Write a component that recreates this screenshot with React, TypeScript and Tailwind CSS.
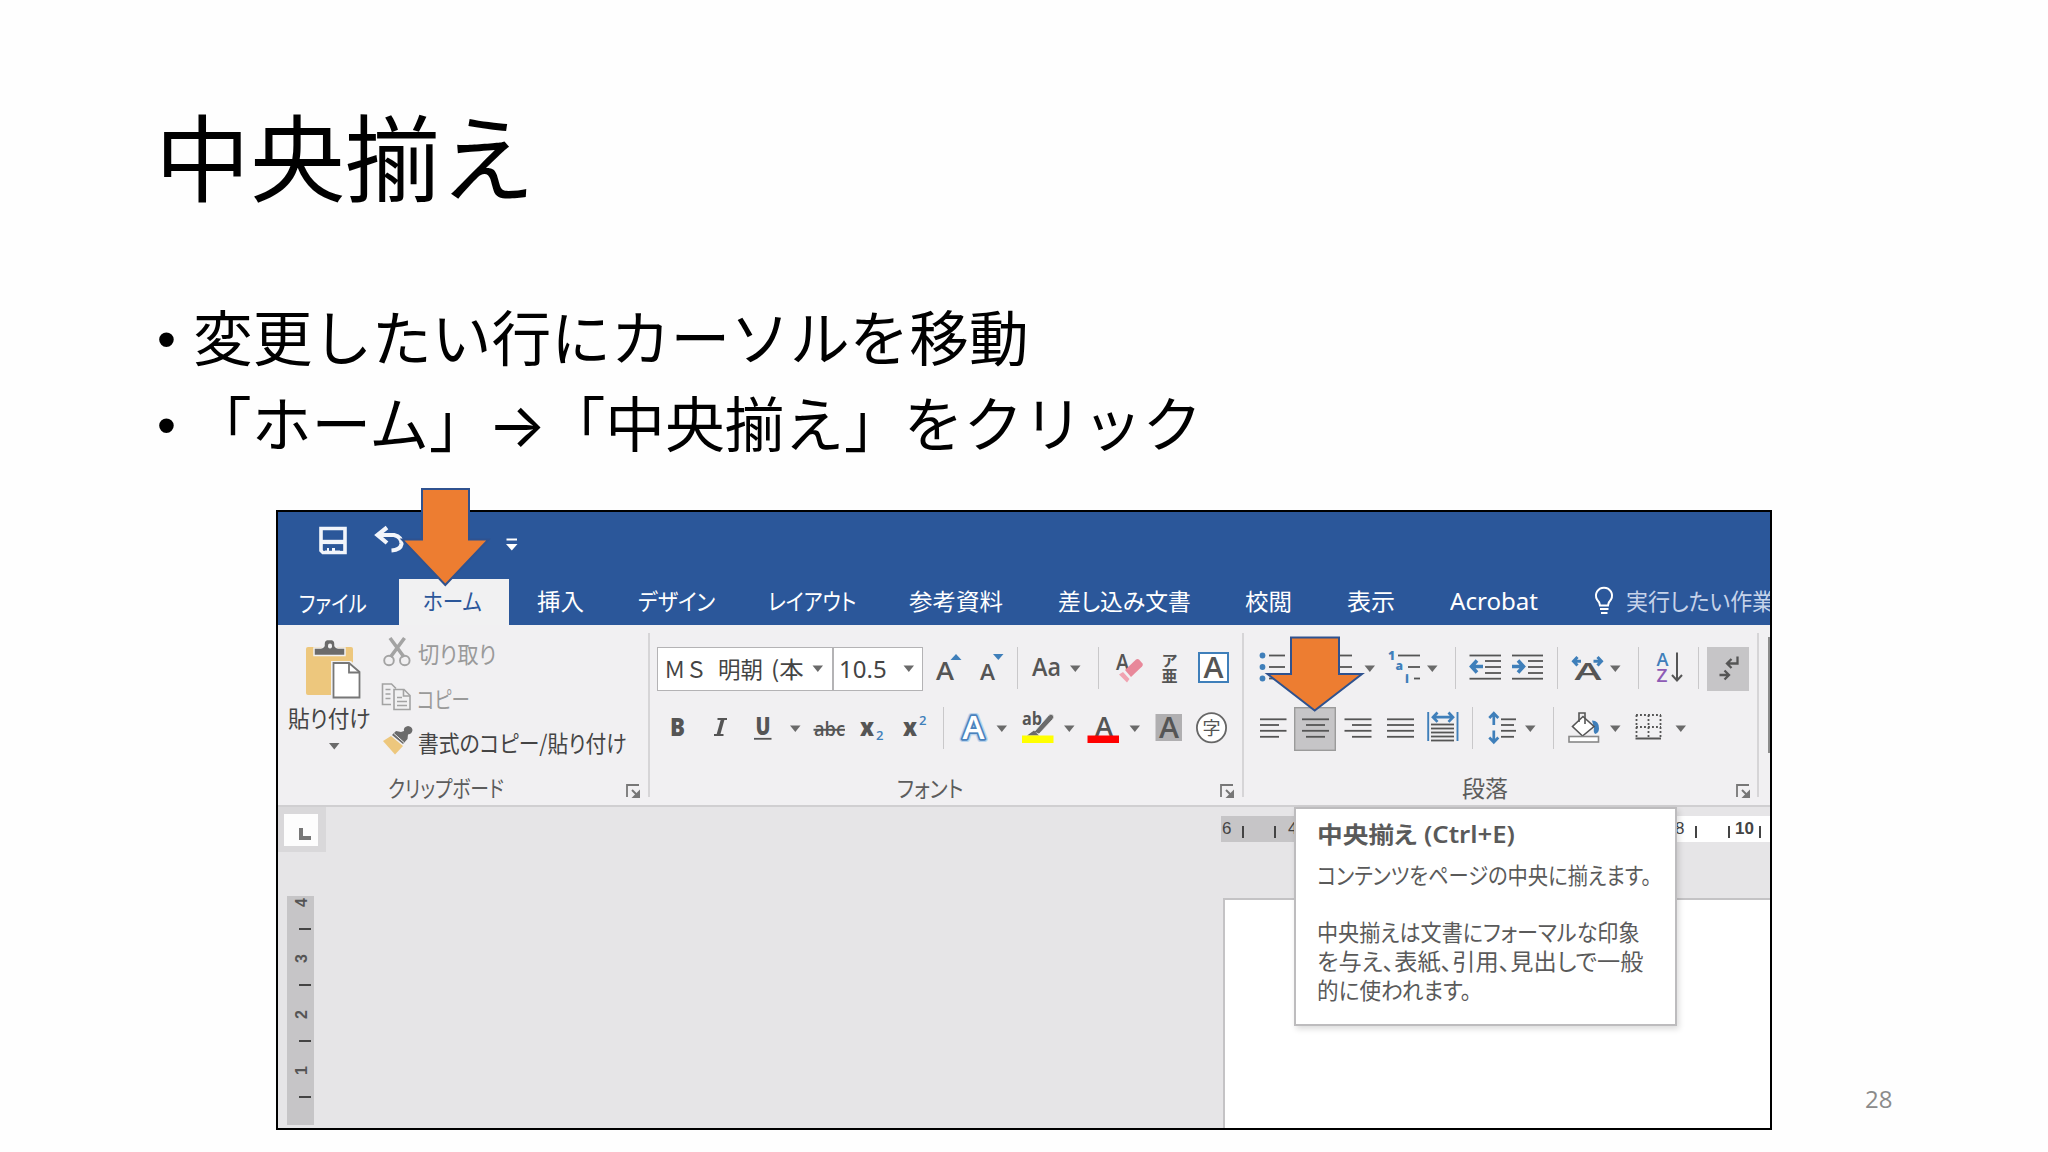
import { useLayoutEffect, useRef, useState } from "react";
import type { ReactNode } from "react";

/** One line of text squeezed or stretched to the width of its box. */
function Fit({ className, children }: { className: string; children: ReactNode }) {
  const box = useRef<HTMLDivElement>(null);
  const text = useRef<HTMLSpanElement>(null);
  const [scale, setScale] = useState(1);
  useLayoutEffect(() => {
    if (box.current && text.current && text.current.offsetWidth > 0) {
      setScale(box.current.clientWidth / text.current.offsetWidth);
    }
  }, []);
  return (
    <div ref={box} className={`shrink-0 whitespace-nowrap ${className}`}>
      <span ref={text} className="inline-block origin-left" style={{ transform: `scaleX(${scale})` }}>
        {children}
      </span>
    </div>
  );
}

type IconProps = { x: number; y: number; w: number; h?: number; className?: string; children: ReactNode };

function Icon({ x, y, w, h = 44, className = "", children }: IconProps) {
  return (
    <svg width={w} height={h} viewBox={`${x} ${y} ${w} ${h}`} className={`block shrink-0 overflow-visible ${className}`}>
      {children}
    </svg>
  );
}

const G = "#555555";
const B = "#3f7fba";

function Caret({ x, y }: { x: number; y: number }) {
  return <path d={`M${x} ${y}h10.5l-5.2 6.5z`} fill="#6a6a6a" />;
}

function Lines({ rows }: { rows: [number, number, number][] }) {
  return (
    <>
      {rows.map(([x1, x2, y]) => (
        <path key={`${x1}-${y}`} d={`M${x1} ${y}H${x2}`} stroke={G} strokeWidth="1.8" />
      ))}
    </>
  );
}

function Letter({ x, y, size, children, fill = G, bold = true, w }: { x: number; y: number; size: number; children: ReactNode; fill?: string; bold?: boolean; w?: number }) {
  return (
    <text x={x} y={y} fontSize={size} fill={fill} fontWeight={bold ? 600 : 400} textLength={w} lengthAdjust="spacingAndGlyphs" fontFamily="'Open Sans','Noto Sans CJK JP',sans-serif">
      {children}
    </text>
  );
}

function Sep({ className }: { className: string }) {
  return <div className={`h-[42px] w-px shrink-0 bg-[#c9c8ca] ${className}`} />;
}

function GroupSep() {
  return <div className="mt-2 h-[164px] w-[2px] shrink-0 bg-[#d6d5d7]" />;
}

function Launcher({ className }: { className: string }) {
  return (
    <Icon x={0} y={0} w={14} h={14} className={className}>
      <path d="M1 13V1H13" fill="none" stroke="#777" strokeWidth="1.8" />
      <path d="M6 6l5 5" stroke="#777" strokeWidth="2" />
      <path d="M14 5.5V14H5.5z" fill="#777" />
    </Icon>
  );
}

const TAB = "text-[23px] leading-6 text-white";

function TitleBar() {
  return (
    <div className="flex h-[67px] items-start">
      <Icon x={319} y={526} w={28} h={30} className="mt-[14px] ml-[41px]">
        <path d="M321 528.5h24v24h-22l-2-2z" fill="none" stroke="#f2f5fb" strokeWidth="3.6" />
        <path d="M321 542h24" stroke="#f2f5fb" strokeWidth="4.4" />
        <path d="M325 554v-7h4v4h3v-4h8v7z" fill="#f2f5fb" />
        <path d="M323 544.500h20v3.500h-20z" fill="#2b579a" />
        <path d="M323 544.500h4v6h-4zM335 547h8v3.500h-8z" fill="#2b579a" />
      </Icon>
      <Icon x={374} y={526} w={30} h={30} className="mt-[14px] ml-[27px]">
        <path d="M378 535H394q8 2 7.500 9q-1 6-10 6.500" fill="none" stroke="#f2f5fb" strokeWidth="4.200" />
        <path d="M387 527.500l-9.500 7.500 9.500 8" fill="none" stroke="#f2f5fb" strokeWidth="4.200" />
      </Icon>
      <Icon x={506} y={536} w={12} h={16} className="mt-[24px] ml-[102px]">
        <path d="M506.500 539.500h10.500" stroke="#fff" strokeWidth="2" />
        <path d="M506 544h11.500l-5.700 6.500z" fill="#fff" />
      </Icon>
    </div>
  );
}

function TabStrip() {
  return (
    <div className="flex h-[46px] items-start overflow-hidden">
      <Fit className={`mt-[11px] ml-[21px] w-[68px] ${TAB}`}>ファイル</Fit>
      <div className="ml-[32px] flex h-[46px] w-[110px] shrink-0 bg-[#f1f1f2]">
        <Fit className="mt-[9px] ml-[24px] w-[59px] text-[23px] leading-6 text-[#2b579a]">ホーム</Fit>
      </div>
      <Fit className={`mt-[9px] ml-[28px] w-[47px] ${TAB}`}>挿入</Fit>
      <Fit className={`mt-[9px] ml-[54px] w-[77px] ${TAB}`}>デザイン</Fit>
      <Fit className={`mt-[9px] ml-[53px] w-[88px] ${TAB}`}>レイアウト</Fit>
      <Fit className={`mt-[9px] ml-[53px] w-[94px] ${TAB}`}>参考資料</Fit>
      <Fit className={`mt-[9px] ml-[55px] w-[133px] ${TAB}`}>差し込み文書</Fit>
      <Fit className={`mt-[9px] ml-[54px] w-[47px] ${TAB}`}>校閲</Fit>
      <Fit className={`mt-[9px] ml-[55px] w-[48px] ${TAB}`}>表示</Fit>
      <Fit className={`mt-[10px] ml-[55px] w-[88px] font-['Noto_Sans'] ${TAB}`}>Acrobat</Fit>
      <Icon x={1594} y={586} w={20} h={30} className="mt-[7px] ml-[56px]">
        <path d="M1600 605.500q-.5-3.500-3-6a8 8 0 1 1 14 0q-2.500 2.500-3 6z" fill="none" stroke="#fff" strokeWidth="2" />
        <path d="M1600 609h8.500M1601 613h6.500" stroke="#fff" strokeWidth="2" />
      </Icon>
      <Fit className="mt-[9px] ml-[12px] w-[148px] text-[23px] leading-6 text-[#c6d3ea]">実行したい作業</Fit>
    </div>
  );
}

function ClipboardGroup() {
  return (
    <div className="flex w-[370px] shrink-0 flex-col text-[23px] leading-6 text-[#444]">
      <div className="flex h-[151px]">
        <div className="w-[105px] shrink-0">
          <Icon x={304} y={638} w={58} h={64} className="mt-[13px] ml-[26px]">
            <rect x="306" y="647" width="47" height="48" rx="2" fill="#edc77d" />
            <path d="M314 655.500v-7.500h7q2 0 3-2v-2q0-4 3-4.500h5q3 .5 3 4.500v2q1 2 3 2h7v7.500z" fill="#6b6b6b" stroke="#f1f1f2" strokeWidth="1.500" />
            <rect x="328" y="643.500" width="4" height="5" rx="2" fill="#f1f1f2" />
            <path d="M331 661h20l11 10v30h-31z" fill="#f1f1f2" />
            <path d="M333.500 663h15.500l10.500 9v25.500h-26z" fill="#fff" stroke="#777" strokeWidth="1.800" />
            <path d="M349 663v9.500h10.500" fill="none" stroke="#777" strokeWidth="1.800" />
          </Icon>
          <Fit className="mt-[3px] ml-[10px] w-[83px]">貼り付け</Fit>
          <Icon x={328} y={742} w={12} h={8} className="mt-[13px] ml-[50px]">
            <Caret x={329} y={743} />
          </Icon>
        </div>
        <div className="pt-[6px]">
          <div className="flex h-[44px] items-start text-[#9a9a9a]">
            <Icon x={383} y={631} w={28}>
              <path d="M390 638l14 19M404.500 638l-14 19" stroke="#a3a3a3" strokeWidth="3.600" />
              <circle cx="389" cy="660.500" r="4.800" fill="none" stroke="#a3a3a3" strokeWidth="1.900" />
              <circle cx="404.800" cy="660.500" r="4.800" fill="none" stroke="#a3a3a3" strokeWidth="1.900" />
            </Icon>
            <Fit className="mt-[10px] ml-[7px] w-[78px]">切り取り</Fit>
          </div>
          <div className="flex h-[44px] items-start text-[#9a9a9a]">
            <Icon x={383} y={675} w={28}>
              <g fill="none" stroke="#a3a3a3" strokeWidth="1.600">
                <path d="M391 704.500h-8.500v-20.500h9l4.500 4.500" />
                <path d="M385.500 689.500h5M385.500 694h5M385.500 698.500h5" />
                <path d="M394 689.500h10l6 6v14h-16z" fill="#f1f1f2" />
                <path d="M403.500 689.500v6.500h6.500M397 697.500h5M397 701.500h10M397 705.500h10" />
              </g>
            </Icon>
            <Fit className="mt-[11px] ml-[6px] w-[53px]">コピー</Fit>
          </div>
          <div className="flex h-[44px] items-start">
            <Icon x={383} y={719} w={28}>
              <path d="M383 741l8-5 12 10-8 8.500z" fill="#edc77d" />
              <path d="M392 735l4-4 5 1 3-1q-1-4 4-5 4 .5 4.500 4-.5 4-4.500 4.500l-.5 4.500-4.500 5z" fill="#6b6b6b" />
              <path d="M394 733.500l10 9" stroke="#f1f1f2" strokeWidth="1" />
            </Icon>
            <Fit className="mt-[11px] ml-[7px] w-[209px]">書式のコピー/貼り付け</Fit>
          </div>
        </div>
      </div>
      <div className="flex text-[#5c5c5c]">
        <Fit className="-mt-px ml-[110px] w-[116px]">クリップボード</Fit>
        <Launcher className="mt-[8px] ml-[122px]" />
      </div>
    </div>
  );
}

function FontGroup() {
  return (
    <div className="flex w-[592px] shrink-0 flex-col pt-[22px] text-[#5c5c5c]">
      <div className="flex h-[44px] items-start">
        <div className="ml-[7px] flex h-[44px] w-[176px] shrink-0 items-center border border-[#b4b3b5] bg-white pb-[2px] text-[23px] leading-6 text-[#444]">
          <Fit className="ml-[6px] w-[43px] [font-feature-settings:normal]">ＭＳ</Fit>
          <Fit className="ml-[11px] w-[45px]">明朝</Fit>
          <Fit className="ml-[8px] w-[33px]">(本</Fit>
          <Icon x={812} y={647} w={12} className="mt-[2px] ml-[8px]">
            <Caret x={812.500} y={665.500} />
          </Icon>
        </div>
        <div className="flex h-[44px] w-[90px] shrink-0 items-center border border-[#b4b3b5] bg-white">
          <Fit className="ml-[5px] w-[48px] font-['Noto_Sans'] text-[24px] leading-6 text-[#444]">10.5</Fit>
          <Icon x={903} y={647} w={12} className="ml-[16px]">
            <Caret x={903.500} y={665.500} />
          </Icon>
        </div>
        <Icon x={934} y={647} w={28} className="ml-[11px]">
          <Letter x={936} y={680} size={26} w={18}>A</Letter>
          <path d="M950.500 660h11l-5.500-6z" fill={B} />
        </Icon>
        <Icon x={978} y={647} w={26} className="ml-[16px]">
          <Letter x={980} y={680} size={21.500} w={15}>A</Letter>
          <path d="M993 654h10.500l-5.200 6z" fill={B} />
        </Icon>
        <Sep className="ml-[13px]" />
        <Icon x={1030} y={647} w={52} className="ml-[12px]">
          <Letter x={1032} y={676} size={25} w={29}>Aa</Letter>
          <Caret x={1070} y={665.500} />
        </Icon>
        <Sep className="ml-[16px]" />
        <Icon x={1115} y={647} w={30} className="ml-[16px]">
          <Letter x={1116} y={669.500} size={22} w={13}>A</Letter>
          <path d="M1125 670l11-10.500q1.500-1.200 3 0l3.500 4q1 1.500-.5 3l-11 10.500z" fill="#e8889a" />
          <path d="M1123 672l6.500 7-2.500 3.500-8-8z" fill="#f0a3b1" />
        </Icon>
        <Icon x={1160} y={647} w={20} className="ml-[15px]">
          <Letter x={1162} y={665.500} size={15} w={15}>ア</Letter>
          <Letter x={1161.500} y={681.500} size={16} w={16}>亜</Letter>
        </Icon>
        <Icon x={1198} y={647} w={31} className="ml-[18px]">
          <rect x="1199" y="653" width="29" height="29" fill="#fff" stroke={B} strokeWidth="2" />
          <Letter x={1203.500} y={677.500} size={28} w={20}>A</Letter>
        </Icon>
      </div>
      <div className="mt-[16px] flex h-[44px] items-start">
        <Icon x={668} y={707} w={18} className="ml-[18px]">
          <text x="670" y="735.500" fontSize="24" fontWeight="800" fill={G} textLength="15" lengthAdjust="spacingAndGlyphs" fontFamily="'Open Sans',sans-serif">B</text>
        </Icon>
        <Icon x={712} y={707} w={17} className="ml-[26px]">
          <path d="M717.500 719h9.500M714 735h9.500" stroke={G} strokeWidth="2.200" />
          <path d="M722.800 719l-4.500 16" stroke={G} strokeWidth="3.600" />
        </Icon>
        <Icon x={752} y={707} w={50} className="ml-[23px]">
          <Letter x={755.500} y={735} size={24} w={15}>
            <tspan fontWeight="800">U</tspan>
          </Letter>
          <path d="M754 738.800h17.500" stroke={G} strokeWidth="1.800" />
          <Caret x={790} y={725.500} />
        </Icon>
        <Icon x={812} y={707} w={35} className="ml-[10px]">
          <Letter x={814} y={735.500} size={20.500} w={31}>abc</Letter>
          <path d="M813.500 729.800h31.500" stroke={G} strokeWidth="2" />
        </Icon>
        <Icon x={858} y={707} w={28} className="ml-[11px]">
          <Letter x={860} y={735.500} size={24} w={14}>
            <tspan fontWeight="800">x</tspan>
          </Letter>
          <Letter x={876} y={739.500} size={12.500} w={7.500} fill={B}>2</Letter>
        </Icon>
        <Icon x={901} y={707} w={27} className="ml-[15px]">
          <Letter x={903} y={735.500} size={24} w={14}>
            <tspan fontWeight="800">x</tspan>
          </Letter>
          <Letter x={919} y={724.500} size={12.500} w={7.500} fill={B}>2</Letter>
        </Icon>
        <Sep className="ml-[15px]" />
        <Icon x={958} y={707} w={50} className="ml-[14px]">
          <g fontFamily="'Open Sans',sans-serif" fontSize="32" fontWeight="600" strokeLinejoin="round">
            <text x="962.500" y="738.500" textLength="22" lengthAdjust="spacingAndGlyphs" fill="none" stroke="#b9d3ec" strokeWidth="6">A</text>
            <text x="962.500" y="738.500" textLength="22" lengthAdjust="spacingAndGlyphs" fill="none" stroke="#4a82bd" strokeWidth="3.400">A</text>
            <text x="962.500" y="738.500" textLength="22" lengthAdjust="spacingAndGlyphs" fill="#fff">A</text>
          </g>
          <Caret x={996.500} y={725.500} />
        </Icon>
        <Icon x={1020} y={707} w={56} className="ml-[12px]">
          <text x="1022" y="725" fontSize="18" fontWeight="700" fill={G} textLength="20" lengthAdjust="spacingAndGlyphs" fontFamily="'Open Sans',sans-serif">ab</text>
          <path d="M1034 732l14.500-16.500q2.500-2.500 4.500-.5t-.5 4.500L1039 734z" fill="#6b6b6b" stroke="#f1f1f2" strokeWidth=".8" />
          <path d="M1027 735.500l7-5 5 5z" fill="#6b6b6b" />
          <path d="M1022 735.500h31.500v7.500h-31.500z" fill="#ff0" />
          <Caret x={1064} y={725.500} />
        </Icon>
        <Icon x={1085} y={707} w={56} className="ml-[9px]">
          <Letter x={1095} y={735.500} size={27} w={18}>A</Letter>
          <path d="M1087.500 735.500h31.500v7.500h-31.500z" fill="#f00" />
          <Caret x={1129.500} y={725.500} />
        </Icon>
        <Icon x={1155} y={707} w={27} className="ml-[14px]">
          <path d="M1155.500 714h26.500v27h-26.500z" fill="#b0afb1" />
          <Letter x={1159} y={737.500} size={28} w={20}>A</Letter>
        </Icon>
        <Icon x={1195} y={707} w={33} className="ml-[13px]">
          <circle cx="1211.500" cy="727.700" r="14.600" fill="#fff" stroke="#666" strokeWidth="1.800" />
          <Letter x={1202.500} y={734.500} size={18} bold={false}>字</Letter>
        </Icon>
      </div>
      <div className="mt-[25px] flex text-[23px] leading-6">
        <Fit className="-mt-px ml-[247px] w-[66px]">フォント</Fit>
        <Launcher className="mt-[8px] ml-[257px]" />
      </div>
    </div>
  );
}

function ParagraphGroup() {
  return (
    <div className="flex w-[513px] shrink-0 flex-col pt-[22px] text-[#5c5c5c]">
      <div className="flex h-[44px] items-start">
        <Icon x={1258} y={647} w={28} className="ml-[14px]">
          {[655.500, 667, 678.500].map((y) => (
            <circle key={y} cx="1262.500" cy={y} r="2.900" fill={B} />
          ))}
          <Lines rows={[[1269, 1285, 655.500], [1269, 1285, 667], [1269, 1285, 678.500]]} />
        </Icon>
        <Icon x={1310} y={647} w={66} className="ml-[24px]">
          <Lines rows={[[1320, 1352, 655.500], [1320, 1352, 667]]} />
          <Caret x={1364.500} y={665.500} />
        </Icon>
        <Icon x={1386} y={647} w={52} className="ml-[10px]">
          <text fontSize="12" fontWeight="800" fill={B} fontFamily="'Open Sans',sans-serif">
            <tspan x="1388" y="660">1</tspan>
            <tspan x="1395.500" y="669.500">a</tspan>
            <tspan x="1405" y="683">i</tspan>
          </text>
          <Lines rows={[[1398, 1420, 655.500], [1408, 1420, 667], [1414, 1420, 678.500]]} />
          <Caret x={1427} y={665.500} />
        </Icon>
        <Sep className="ml-[17px]" />
        <Icon x={1468} y={647} w={34} className="ml-[12px]">
          <Lines rows={[[1469.500, 1501, 655.500], [1485, 1501, 661], [1485, 1501, 667], [1485, 1501, 673], [1469.500, 1501, 678.700]]} />
          <path d="M1483 666.500h-11M1477 660.500l-5.500 6 5.500 6" fill="none" stroke={B} strokeWidth="3.600" />
        </Icon>
        <Icon x={1510} y={647} w={34} className="ml-[8px]">
          <Lines rows={[[1512, 1543, 655.500], [1528, 1543, 661], [1528, 1543, 667], [1528, 1543, 673], [1512, 1543, 678.700]]} />
          <path d="M1512 666.500h11M1518 660.500l5.500 6-5.500 6" fill="none" stroke={B} strokeWidth="3.600" />
        </Icon>
        <Sep className="ml-[13px]" />
        <Icon x={1570} y={647} w={52} className="ml-[12px]">
          <Letter x={1574.500} y={680} size={22.500} w={27}>A</Letter>
          <path d="M1581 661.300h-7M1577.500 657l-4 4.300 4 4.300M1593.500 661.300h7M1597.500 657l4 4.300-4 4.300" fill="none" stroke={B} strokeWidth="3" />
          <Caret x={1610} y={665.500} />
        </Icon>
        <Sep className="ml-[16px]" />
        <Icon x={1654} y={647} w={30} className="ml-[15px]">
          <Letter x={1656.500} y={665.500} size={18} w={12} fill={B}>A</Letter>
          <Letter x={1656.500} y={681.500} size={18} w={11} fill="#8e5bb5">Z</Letter>
          <path d="M1677 652.500v27M1672 675l5 5.500 5-5.500" fill="none" stroke={G} strokeWidth="2" />
        </Icon>
        <Sep className="ml-[14px]" />
        <Icon x={1707} y={647} w={42} className="ml-[8px]">
          <path d="M1707 647h42v44h-42z" fill="#c6c5c7" />
          <path d="M1737.500 656.500v7h-10M1731.500 659l-4.500 4.500 4.500 4.500M1719.500 675h8M1724.500 670.500l4.500 4.500-4.500 4.500" fill="none" stroke={G} strokeWidth="2.300" />
        </Icon>
      </div>
      <div className="mt-[16px] flex h-[44px] items-start">
        <Icon x={1258} y={707} w={32} className="ml-[14px]">
          <Lines rows={[[1260, 1286.500, 719.300], [1260, 1279, 725], [1260, 1286.500, 730.800], [1260, 1279, 736.800]]} />
        </Icon>
        <Icon x={1294} y={707} w={42} className="ml-[4px]">
          <rect x="1294.700" y="707.700" width="40.600" height="42.600" fill="#c6c5c7" stroke="#9b9b9b" strokeWidth="1.400" />
          <Lines rows={[[1302, 1329, 719.300], [1306, 1325, 725], [1302, 1329, 730.800], [1306, 1325, 736.800]]} />
        </Icon>
        <Icon x={1342} y={707} w={32} className="ml-[6px]">
          <Lines rows={[[1344.500, 1371.500, 719.300], [1352, 1371.500, 725], [1344.500, 1371.500, 730.800], [1352, 1371.500, 736.800]]} />
        </Icon>
        <Icon x={1385} y={707} w={31} className="ml-[11px]">
          <Lines rows={[[1387, 1414, 719.300], [1387, 1414, 725], [1387, 1414, 730.800], [1387, 1414, 736.800]]} />
        </Icon>
        <Icon x={1426} y={707} w={34} className="ml-[10px]">
          <path d="M1428.200 712v29M1457.500 712v29" stroke={B} strokeWidth="1.900" />
          <path d="M1433 717.200h20M1437.500 712.500l-4.500 4.700 4.500 4.700M1448.500 712.500l4.500 4.700-4.500 4.700" fill="none" stroke={B} strokeWidth="2.700" />
          <Lines rows={[[1431, 1454, 724.500], [1431, 1454, 728.500], [1431, 1454, 732.500], [1431, 1454, 736.500], [1431, 1454, 740.500]]} />
        </Icon>
        <Sep className="ml-[12px]" />
        <Icon x={1487} y={707} w={50} className="ml-[14px]">
          <path d="M1493.800 725v-11M1489.300 718l4.500-4.700 4.500 4.700M1493.800 730.500v11M1489.300 737.500l4.500 4.700 4.500-4.700" fill="none" stroke={B} strokeWidth="2.700" />
          <Lines rows={[[1501, 1516, 719.300], [1501, 1514, 725], [1501, 1516, 730.800], [1501, 1514, 736.800]]} />
          <Caret x={1525} y={725.500} />
        </Icon>
        <Sep className="ml-[16px]" />
        <Icon x={1566} y={707} w={56} className="ml-[12px]">
          <path d="M1592 720.500q7 0 7 8 0 4-3.500 5.500-2.500-1-1.500-6z" fill={B} />
          <path d="M1583 716.500l11 10-11.500 9.500-10-9.500z" fill="#fff" stroke={G} strokeWidth="1.600" />
          <path d="M1579 722v-9h6v11" fill="none" stroke={G} strokeWidth="1.600" />
          <rect x="1569" y="736.500" width="29.500" height="5.500" fill="#fff" stroke="#888" strokeWidth="1.600" />
          <Caret x={1610} y={725.500} />
        </Icon>
        <Icon x={1633} y={707} w={55} className="ml-[11px]">
          <path d="M1636 715h25M1636 727h25M1636.500 715v22M1648.500 715v22M1660.500 715v22" fill="none" stroke={G} strokeWidth="1.800" strokeDasharray="1.900 2.100" />
          <path d="M1635.500 738.500h25.500" stroke={G} strokeWidth="2" />
          <Caret x={1675.500} y={725.500} />
        </Icon>
      </div>
      <div className="mt-[25px] flex text-[23px] leading-6">
        <Fit className="-mt-px ml-[218px] w-[46px]">段落</Fit>
        <Launcher className="mt-[8px] ml-[228px]" />
      </div>
    </div>
  );
}

function Ribbon() {
  return (
    <div className="flex h-[182px] border-b-2 border-[#d0cfd1] bg-[#f1f0f2]">
      <ClipboardGroup />
      <GroupSep />
      <FontGroup />
      <GroupSep />
      <ParagraphGroup />
      <GroupSep />
      <div className="mt-3 ml-auto h-[116px] w-[2px] bg-[#8c8c8c]" />
    </div>
  );
}

const RULER_TEXT = "shrink-0 font-['Liberation_Sans'] text-[17px] leading-5 text-[#444]";
const TICK = "mt-[5px] h-[12px] w-[2px] shrink-0 bg-[#444]";

function VerticalRuler() {
  return (
    <div className="mt-[44px] ml-[9px] flex h-[229px] w-[27px] flex-col items-center bg-[#c6c5c7]">
      {["4", "3", "2", "1"].map((n) => (
        <div key={n} className="flex h-[56px] w-[27px] flex-col items-center">
          <div className="ml-[2px] h-[13px] shrink-0 -rotate-90 font-['Liberation_Sans'] text-[16px] leading-[13px] font-bold text-[#555]">{n}</div>
          <div className="mt-[19px] ml-[8px] h-[2px] w-[12px] bg-[#444]" />
        </div>
      ))}
    </div>
  );
}

function Tooltip() {
  return (
    <div className="absolute top-[295px] left-[1016px] h-[219px] w-[383px] border-2 border-[#bdbcbe] bg-white pt-[11px] pl-[21px] text-[23px] leading-[29px] text-[#5a5a5a] shadow-[2px_3px_6px_rgba(0,0,0,0.14)]">
      <Fit className="w-[198px] font-['Noto_Sans','Noto_Sans_CJK_JP'] font-semibold">中央揃え (Ctrl+E)</Fit>
      <Fit className="mt-[11px] w-[334px]">コンテンツをページの中央に揃えます。</Fit>
      <Fit className="mt-[28px] w-[323px]">中央揃えは文書にフォーマルな印象</Fit>
      <Fit className="w-[327px]">を与え、表紙、引用、見出しで一般</Fit>
      <Fit className="w-[154px]">的に使われます。</Fit>
    </div>
  );
}

function Workspace() {
  return (
    <div className="flex flex-1 overflow-hidden bg-[#e6e5e7]">
      <div className="w-[48px] shrink-0">
        <div className="flex h-[45px] w-[48px] items-center bg-[#d9d8da]">
          <div className="ml-[6px] flex h-[32px] w-[34px] items-end bg-[#fdfdfd] pb-[6px] pl-[15px]">
            <div className="h-[12px] w-[12px] border-b-[4px] border-l-[4px] border-[#777]" />
          </div>
        </div>
        <VerticalRuler />
      </div>
      <div className="flex flex-1 flex-col">
        <div className="mt-[9px] ml-[895px] flex h-[26px] items-center">
          <div className="flex h-[26px] w-[73px] shrink-0 items-center overflow-hidden bg-[#c6c5c7]">
            <div className={`ml-[1px] w-[10px] ${RULER_TEXT}`}>6</div>
            <div className={`ml-[10px] ${TICK}`} />
            <div className={`ml-[30px] ${TICK}`} />
            <div className={`ml-[12px] w-[10px] ${RULER_TEXT}`}>4</div>
          </div>
          <div className="flex h-[26px] flex-1 items-center bg-white pl-[381px]">
            <div className={`w-[10px] ${RULER_TEXT}`}>8</div>
            <div className={`ml-[10px] ${TICK}`} />
            <div className={`ml-[31px] ${TICK}`} />
            <div className={`ml-[5px] w-[19px] font-semibold ${RULER_TEXT}`}>10</div>
            <div className={`ml-[5px] ${TICK}`} />
          </div>
        </div>
        <div className="mt-[56px] ml-[897px] flex-1 border-t-2 border-l-2 border-[#c4c3c5] bg-white" />
      </div>
    </div>
  );
}

function WordWindow() {
  return (
    <div className="relative mt-[46px] ml-[276px] h-[620px] w-[1496px] border-2 border-black bg-[#2b579a] [font-feature-settings:'palt']">
      <div className="flex h-full flex-col overflow-hidden">
        <TitleBar />
        <TabStrip />
        <Ribbon />
        <Workspace />
      </div>
      <Tooltip />
      <svg className="absolute -top-[25px] left-[121px] overflow-visible" width="92" height="100" viewBox="399 487 92 100">
        <path d="M422 489h47v50.500h19.500l-43.200 45.500-43.300-45.500h20z" fill="#ed7d31" stroke="#2f528f" strokeWidth="2" />
      </svg>
      <svg className="absolute top-[124px] left-[986px] overflow-visible" width="102" height="78" viewBox="1264 636 102 78">
        <path d="M1291 637.500h48v36.500h23l-47.300 36.500-47.200-36.500h23.500z" fill="#ed7d31" stroke="#2f528f" strokeWidth="2" />
      </svg>
    </div>
  );
}

function Bullet() {
  return <span className="relative top-[4px] w-[38px] shrink-0 font-['Liberation_Sans'] text-[54px]">•</span>;
}

export default function App() {
  return (
    <div className="relative h-[1152px] w-[2048px] overflow-hidden bg-[#fefefe] pt-[107px] font-['Noto_Sans_CJK_JP',sans-serif] text-black" lang="ja">
      <h1 className="ml-[155px] text-[95px] leading-[94px] whitespace-nowrap">中央揃え</h1>
      <ul className="mt-[91px] ml-[157px] text-[59.7px] leading-[86px] whitespace-nowrap">
        <li className="flex h-[86px]">
          <Bullet />
          <span className="-ml-[2px]">変更したい行にカーソルを移動</span>
        </li>
        <li className="flex h-[86px]">
          <Bullet />
          <span className="-ml-[3px]">「ホーム」</span>
          <span className="relative top-[4px] flex w-[57px] justify-center font-['Inter'] text-[62px]">→</span>
          <span>「中央揃え」をクリック</span>
        </li>
      </ul>
      <WordWindow />
      <div className="absolute top-[1084px] left-[1865px] flex">
        <Fit className="w-[27px] font-['Open_Sans'] text-[24px] leading-[30px] text-[#8b8b8b]">28</Fit>
      </div>
    </div>
  );
}
